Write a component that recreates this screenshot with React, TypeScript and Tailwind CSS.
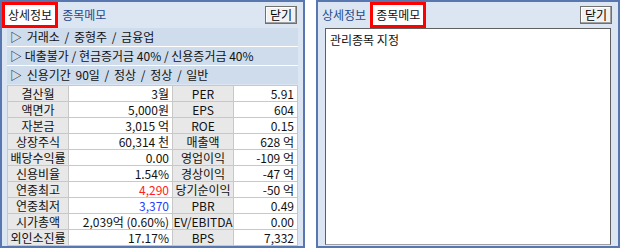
const font = { fontFamily: '"Noto Sans CJK KR", "Noto Sans", sans-serif' };

const rows: [string, string, string, string, string?][] = [
  ["결산월", "3월", "PER", "5.91"],
  ["액면가", "5,000원", "EPS", "604"],
  ["자본금", "3,015 억", "ROE", "0.15"],
  ["상장주식", "60,314 천", "매출액", "628 억"],
  ["배당수익률", "0.00", "영업이익", "-109 억"],
  ["신용비율", "1.54%", "경상이익", "-47 억"],
  ["연중최고", "4,290", "당기순이익", "-50 억", "text-[#ff2020]"],
  ["연중최저", "3,370", "PBR", "0.49", "text-[#2040ff]"],
  ["시가총액", "2,039억 (0.60%)", "EV/EBITDA", "0.00"],
  ["외인소진률", "17.17%", "BPS", "7,332"],
];

const info: [string, string][] = [
  ["▷ 거래소 / 중형주 / 금융업", "[word-spacing:2px]"],
  ["▷ 대출불가 / 현금증거금 40% / 신용증거금 40%", ""],
  ["▷ 신용기간 90일 / 정상 / 정상 / 일반", "[word-spacing:2px]"],
];

function CloseButton() {
  return (
    <button className="h-[18px] w-[32px] border border-[#707070] bg-[#f2f2f2] text-[12px] leading-none text-black shadow-[inset_-1px_-1px_0_#a0a0a0,inset_1px_1px_0_#ffffff]">
      닫기
    </button>
  );
}

function Tabs({ active }: { active: 0 | 1 }) {
  const names = ["상세정보", "종목메모"];
  return (
    <div className="flex h-[26px] items-center justify-between pr-[6px]">
      <div className="flex h-full items-stretch">
        {names.map((n, i) =>
          i === active ? (
            <div key={n} className="flex items-center border-[3px] border-[#ff0000] bg-white px-[3px] text-[12px] text-[#111]">
              {n}
            </div>
          ) : (
            <div key={n} className="flex items-center px-[4px] text-[12px] text-[#1f4a8a]">
              {n}
            </div>
          )
        )}
      </div>
      <CloseButton />
    </div>
  );
}

export default function App() {
  return (
    <div className="flex h-[249px] w-[620px] gap-[11px] bg-white" style={font}>
      <div className="flex h-[248px] w-[305px] flex-col border-2 border-[#5876b0] bg-[#dce6f2]">
        <Tabs active={0} />
        <div className="flex flex-1 flex-col px-[5px]">
          <div className="flex flex-col gap-[1px] bg-white">
            {info.map(([t, ws]) => (
              <div key={t} className={`flex h-[18px] items-center bg-[#cfdcec] pl-[3px] text-[12px] text-[#111] ${ws}`}>
                {t}
              </div>
            ))}
          </div>
          <table className="mt-[1px] w-full border-collapse border border-[#a8a8a8] bg-white text-[12px] leading-[14px]">
            <tbody>
              {rows.map(([a, b, c, d, color]) => (
                <tr key={a} className="h-[16px]">
                  <td className="w-[61px] border border-[#c8c8c8] bg-[#e8e8e8] p-0 text-center text-[#111]">{a}</td>
                  <td className={`w-[104px] border border-[#c8c8c8] p-0 pr-[3px] text-right ${color ?? "text-[#111]"}`}>{b}</td>
                  <td className="w-[61px] border border-[#c8c8c8] bg-[#e8e8e8] p-0 text-center text-[#111]">{c}</td>
                  <td className="border border-[#c8c8c8] p-0 pr-[3px] text-right text-[#111]">{d}</td>
                </tr>
              ))}
            </tbody>
          </table>
        </div>
      </div>
      <div className="flex h-[248px] w-[304px] flex-col border-2 border-[#5876b0] bg-[#dce6f2]">
        <Tabs active={1} />
        <div className="flex flex-1 px-[7px] pb-[1px]">
          <div className="flex-1 border border-[#606060] border-b-[#a0a0a0] bg-white px-[4px] pt-[2px] text-[12px] text-[#111]">
            관리종목 지정
          </div>
        </div>
      </div>
    </div>
  );
}
